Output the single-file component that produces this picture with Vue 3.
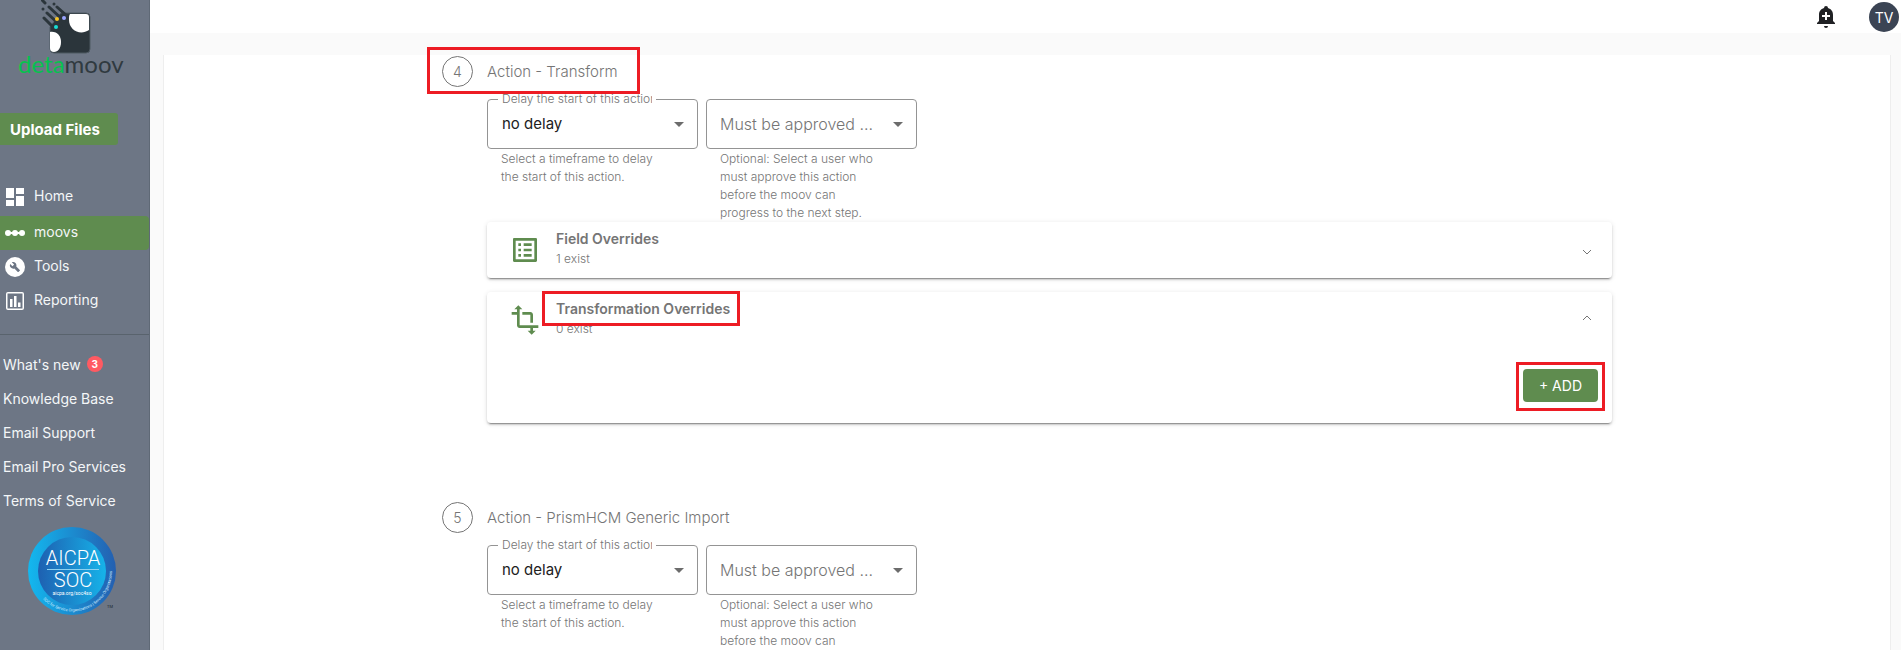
<script setup>
import { ref } from 'vue'

const nav = [
  { label: 'Home', icon: 'home' },
  { label: 'moovs', icon: 'moovs', active: true },
  { label: 'Tools', icon: 'tools' },
  { label: 'Reporting', icon: 'reporting' },
]
const links = [
  { label: "What's new", badge: 3 },
  { label: 'Knowledge Base' },
  { label: 'Email Support' },
  { label: 'Email Pro Services' },
  { label: 'Terms of Service' },
]
const steps = ref([
  {
    number: 4,
    title: 'Action - Transform',
    marked: true,
    delay: 'no delay',
    approver: '',
    panels: [
      { title: 'Field Overrides', count: '1 exist', icon: 'list', open: false },
      { title: 'Transformation Overrides', count: '0 exist', icon: 'transform', open: true, marked: true },
    ],
  },
  { number: 5, title: 'Action - PrismHCM Generic Import', delay: 'no delay', approver: '', panels: [] },
])
</script>

<template>
  <div class="shell">
    <aside class="sidebar">
      <a href="#" class="brand">
        <svg class="mark" viewBox="0 0 50 54" width="50" height="54" aria-hidden="true">
          <path d="M20 13h25a4 4 0 0 1 4 4v32a4 4 0 0 1-4 4H13a4 4 0 0 1-4-4V27l6-8z" fill="#2b353b" stroke="#4f5a63" />
          <g stroke="#2b353b" stroke-width="3" stroke-linecap="round" fill="none">
            <path d="M1 0l3 3M2 9h0M13 4h0M8 7l15 14M6 13l14 13M3 18l12 12M16 7l10 9" />
          </g>
          <path d="M29 14h16a3 3 0 0 1 3 3v13c-9 6-20 0-20-10 0-3 0-5 1-6z" fill="#fff" />
          <path d="M9 32c7-1 11 4 11 10s-3 10-7 10a4 4 0 0 1-4-4z" fill="#fff" />
          <circle cx="16" cy="19" r="2" fill="#f7c427" />
          <circle cx="23" cy="18" r="2" fill="#9aa4ff" />
          <circle cx="15" cy="27" r="2" fill="#18dfd5" />
        </svg>
        <span class="wordmark"><span class="deta">deta</span>moov</span>
      </a>
      <button type="button" class="upload">Upload Files</button>
      <nav class="menu">
        <a v-for="n in nav" :key="n.label" href="#" class="menu-item" :class="{ active: n.active }">
          <svg v-if="n.icon === 'home'" viewBox="0 0 24 24" class="menu-icon"><path d="M3 13h8V3H3v10zm0 8h8v-6H3v6zm10 0h8V11h-8v10zm0-18v6h8V3h-8z" /></svg>
          <svg v-else-if="n.icon === 'moovs'" viewBox="0 0 24 24" class="menu-icon"><path d="M3 11h18v2H3z" /><circle cx="5" cy="12" r="3" /><circle cx="12" cy="12" r="3" /><circle cx="19" cy="12" r="3" /></svg>
          <svg v-else-if="n.icon === 'tools'" viewBox="0 0 24 24" class="menu-icon"><circle cx="12" cy="12" r="10" /><path d="M16.9 15.5l-1.4 1.4c-.2.2-.5.2-.7 0l-3.4-3.4c-1.300.4-2.700.1-3.600-.9-1-1-1.200-2.500-.6-3.700l2.300 2.300 1.600-1.600-2.300-2.300c1.200-.6 2.700-.4 3.700.6.900.9 1.200 2.300.8 3.500l3.500 3.500c.3.200.3.500.1.600z" fill="#6d7685" /></svg>
          <svg v-else viewBox="0 0 24 24" class="menu-icon"><path fill-rule="evenodd" d="M19 3H5a2 2 0 0 0-2 2v14a2 2 0 0 0 2 2h14a2 2 0 0 0 2-2V5a2 2 0 0 0-2-2zM4.500 4.500h15v15h-15z" /><path d="M7 10h2.500v8H7zM11 7h2.500v11H11zM15 13.500h2.500V18H15z" /></svg>
          <span>{{ n.label }}</span>
        </a>
      </nav>
      <nav class="support">
        <a v-for="l in links" :key="l.label" href="#">{{ l.label }}<span v-if="l.badge" class="badge">{{ l.badge }}</span></a>
      </nav>
      <svg class="seal" viewBox="0 0 94 90" width="94" height="90" role="img" aria-label="AICPA SOC">
        <defs>
          <linearGradient id="ring"><stop offset="0" stop-color="#13b8ef" /><stop offset="1" stop-color="#245fb0" /></linearGradient>
          <linearGradient id="disc"><stop offset="0" stop-color="#1e60b1" /><stop offset="1" stop-color="#16b3e9" /></linearGradient>
          <path id="arc" d="M15 73A40 40 0 0 0 84 45A40 40 0 0 0 64 10" />
        </defs>
        <circle cx="44" cy="45" r="44" fill="url(#ring)" />
        <circle cx="44" cy="45" r="34" fill="url(#disc)" />
        <path d="M19 43.500h52" stroke="#8dd1f0" />
        <g fill="#fff" text-anchor="middle" font-family="Roboto, sans-serif">
          <text x="45" y="39" font-size="20" font-weight="300">AICPA</text>
          <text x="45" y="61" font-size="20" font-weight="300">SOC</text>
          <text x="44" y="69" font-size="5">aicpa.org/soc4so</text>
        </g>
        <text fill="#d4ecff" font-family="Roboto, sans-serif" font-size="4"><textPath href="#arc">SOC for Service Organizations | Service Organizations</textPath></text>
        <text x="79" y="82" font-size="4" fill="#20282e" font-family="Roboto, sans-serif">TM</text>
      </svg>
    </aside>

    <div class="page">
      <header class="topbar">
        <button type="button" class="bell" aria-label="Notifications">
          <svg viewBox="0 0 18 22" width="18" height="22"><path d="M9 0a2 2 0 0 1 2 2c3 1 5 3 5 7v6l2 2v1H0v-1l2-2V9c0-4 2-6 5-7a2 2 0 0 1 2-2zM7 20h4a2 2 0 0 1-4 0z" fill="#202124" /><path d="M9 6v8M5 10h8" stroke="#fff" stroke-width="2" /></svg>
        </button>
        <button type="button" class="avatar">TV</button>
      </header>
      <main class="backdrop">
        <div class="card">
          <section v-for="s in steps" :key="s.number" class="step">
            <div class="step-head" :class="{ marked: s.marked }">
              <span class="num">{{ s.number }}</span>
              <h2>{{ s.title }}</h2>
            </div>
            <div class="step-body">
              <div class="fields">
                <div class="field">
                  <label class="float" :for="'delay' + s.number"><span>Delay the start of this action</span></label>
                  <div class="control">
                    <select :id="'delay' + s.number" v-model="s.delay" :aria-describedby="'delayhelp' + s.number"><option>no delay</option></select>
                    <svg viewBox="0 0 10 5" width="10" height="5"><path d="M0 0h10L5 5z" /></svg>
                  </div>
                  <p :id="'delayhelp' + s.number" class="help">Select a timeframe to delay the start of this action.</p>
                </div>
                <div class="field">
                  <div class="control">
                    <select v-model="s.approver" class="empty" aria-label="Must be approved by" :aria-describedby="'approvehelp' + s.number"><option value="">Must be approved ...</option></select>
                    <svg viewBox="0 0 10 5" width="10" height="5"><path d="M0 0h10L5 5z" /></svg>
                  </div>
                  <p :id="'approvehelp' + s.number" class="help">Optional: Select a user who must approve this action before the moov can progress to the next step.</p>
                </div>
              </div>
              <article v-for="p in s.panels" :key="p.title" class="panel">
                <button type="button" class="panel-head" :aria-expanded="p.open" @click="p.open = !p.open">
                  <svg class="panel-icon" viewBox="0 0 24 24" width="32" height="32">
                    <path v-if="p.icon === 'list'" d="M19 5v14H5V5h14m1.1-2H3.900c-.5 0-.9.4-.9.900v16.200c0 .4.400.9.900.9h16.200c.4 0 .9-.5.9-.900V3.900c0-.5-.5-.9-.9-.9zM11 7h6v2h-6V7zm0 4h6v2h-6v-2zm0 4h6v2h-6zM7 7h2v2H7zm0 4h2v2H7zm0 4h2v2H7z" />
                    <path v-else d="M22 18v-2H8V4h2L7 1 4 4h2v2H2v2h4v8c0 1.100.9 2 2 2h8v2h-2l3 3 3-3h-2v-2h4zM10 8h6v6h2V8c0-1.100-.9-2-2-2h-6v2z" />
                  </svg>
                  <span class="panel-text">
                    <span class="panel-title" :class="{ marked: p.marked }">{{ p.title }}</span>
                    <span class="panel-count">{{ p.count }}</span>
                  </span>
                  <svg class="chevron" viewBox="0 0 10 6" width="10" height="6"><path :d="p.open ? 'M1 5l4-4 4 4' : 'M1 1l4 4 4-4'" /></svg>
                </button>
                <div v-if="p.open" class="panel-body">
                  <button type="button" class="add marked">+ ADD</button>
                </div>
              </article>
            </div>
          </section>
        </div>
      </main>
    </div>
  </div>
</template>

<style>
body { overflow: hidden; }
</style>

<style scoped>
* { box-sizing: border-box; }
.shell { display: flex; height: 100vh; overflow: hidden; background: #fff; font-family: Inter, "Open Sans", sans-serif; color: #757575; }
button { font: inherit; border: 0; padding: 0; cursor: pointer; }
a { color: inherit; text-decoration: none; }
h2, p { margin: 0; font-weight: 400; }

.sidebar { flex: 0 0 150px; display: flex; flex-direction: column; background: #6d7685; border-right: 1px solid #5f6976; color: #f4f6f8; font-size: 14px; }
.brand { display: flex; flex-direction: column; align-items: flex-start; height: 113px; padding-left: 18px; }
.mark { display: block; margin-left: 23px; }
.wordmark { font-family: Lato, sans-serif; font-size: 24px; line-height: 20px; color: #303a40; }
.deta { color: #06c24e; }
.upload { align-self: flex-start; height: 32px; padding: 0 18px 0 10px; border-radius: 0 3px 3px 0; background: #5f8c4f; color: #fff; font-size: 15px; font-weight: 700; }
.menu { margin-top: 33px; padding-bottom: 16px; border-bottom: 1px solid #59636d; }
.menu-item { display: flex; align-items: center; gap: 7px; height: 34px; padding-left: 3px; border-radius: 0 4px 4px 0; }
.menu-item:first-child { height: 38px; }
.menu-item > span { padding-bottom: 3px; }
.menu-icon { width: 24px; height: 24px; fill: #fff; }
.menu-item.active { background: #5f8c4f; }
.support { display: flex; flex-direction: column; margin-top: 12px; }
.support a { display: flex; align-items: center; gap: 6px; height: 34px; padding-left: 3px; }
.badge { display: grid; place-items: center; width: 16px; height: 16px; border-radius: 50%; background: #ff5a62; color: #fff; font-size: 10px; font-weight: 700; }
.seal { display: block; margin: 9px 0 0 28px; flex: none; }

.page { flex: 1; min-width: 0; display: flex; flex-direction: column; }
.topbar { flex: 0 0 33px; display: flex; justify-content: flex-end; align-items: flex-start; gap: 34px; padding: 2px 5px 0 0; }
.bell { display: flex; margin-top: 4px; background: none; }
.avatar { width: 30px; height: 30px; border-radius: 50%; background: #3b4454; color: #fff; font-size: 14px; }
.backdrop { flex: 1; min-height: 0; margin-right: 3px; padding: 22px 10px 0 13px; background: #fafafa; }
.card { padding: 0 24px; background: #fff; border: 1px solid #eee; border-width: 0 1px; }
.step { max-width: 1170px; margin: 0 auto; }
.step + .step { padding-top: 78px; }
.step-head { position: relative; display: flex; align-items: center; width: fit-content; gap: 14px; height: 32px; padding-right: 22px; }
.step-head h2 { padding-top: 1px; font-size: 15px; line-height: 32px; font-weight: 300; }
.num { display: grid; place-items: center; width: 31px; height: 31px; border: 1px solid #757575; border-radius: 50%; font-size: 14px; font-weight: 300; }
.step-body { padding: 12px 0 0 45px; }
.fields { display: flex; gap: 8px; height: 123px; }
.field { position: relative; flex: 0 1 211px; min-width: 0; }
.float { position: absolute; top: -8px; left: 11px; width: 158px; padding: 0 4px; background: #fff; font-size: 12px; line-height: 16px; font-weight: 300; z-index: 1; }
.float span { display: block; overflow: hidden; white-space: nowrap; }
.control { display: flex; align-items: center; height: 50px; padding-right: 13px; border: 1px solid #949494; border-radius: 4px; }
.control svg { flex: none; fill: #6c6c6c; pointer-events: none; }
select { appearance: none; flex: 1; min-width: 0; height: 48px; padding: 0 0 2px 14px; border: 0; background: transparent; color: #212121; font: inherit; font-size: 15px; }
select.empty { padding: 0 0 0 13px; color: #757575; font-size: 16px; font-weight: 300; }
.help { padding: 1px 32px 0 14px; font-size: 12px; line-height: 18px; font-weight: 300; }
.panel { border-radius: 4px; background: #fff; box-shadow: 0 3px 1px -2px rgba(0, 0, 0, 0.3), 0 2px 2px 0 rgba(0, 0, 0, 0.14), 0 1px 5px 0 rgba(0, 0, 0, 0.12); }
.panel + .panel { margin-top: 14px; }
.panel-head { display: flex; align-items: center; width: 100%; height: 56px; padding: 0 20px 0 22px; background: none; color: inherit; text-align: left; }
.panel-icon { flex: none; fill: #5f8c4f; }
.panel-text { flex: 1; display: flex; flex-direction: column; align-items: flex-start; padding: 0 0 3px 15px; }
.panel-title { position: relative; font-size: 14px; line-height: 20px; font-weight: 600; }
.panel-count { font-size: 12px; line-height: 20px; font-weight: 300; }
.chevron { fill: none; stroke: #757575; margin-top: 4px; }
.panel-head[aria-expanded="true"] .chevron { margin: 0 0 5px; }
.panel-body { display: flex; justify-content: flex-end; padding: 21px 14px 21px; }
.add { position: relative; height: 33px; padding: 0 16px; border-radius: 4px; background: #5f8c4f; color: #fff; font-size: 14px; }
.marked::after { content: ""; position: absolute; border: 3px solid #ed1c24; pointer-events: none; }
.step-head.marked::after { inset: -8px 0 -7px -15px; z-index: 2; }
.panel-title.marked::after { inset: -8px -10px -7px -14px; }
.add.marked::after { inset: -7px -7px -9px; }
</style>
